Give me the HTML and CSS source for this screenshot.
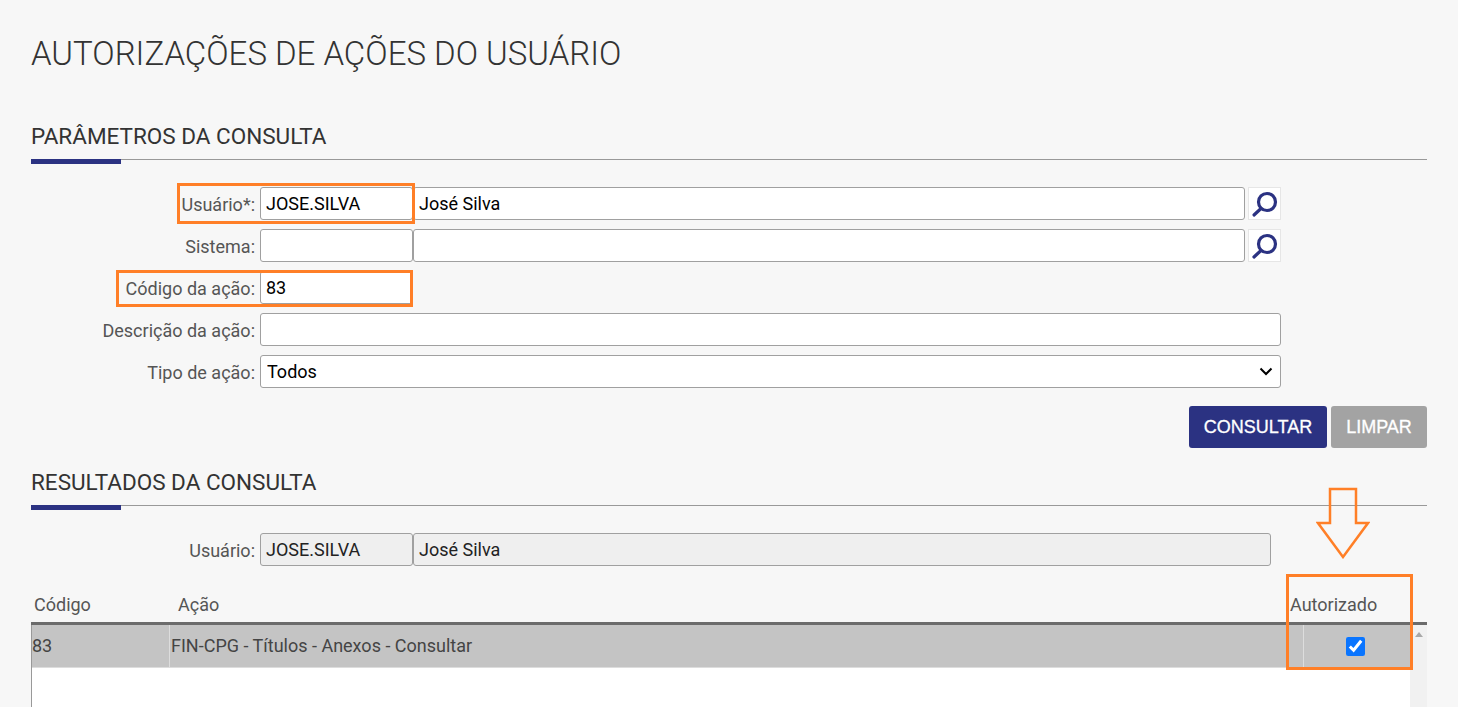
FILE: index.html
```html
<!DOCTYPE html>
<html lang="pt-BR">
<head>
    <meta charset="UTF-8">
    <meta name="viewport" content="width=device-width, initial-scale=1.0">
    <title>Autorizações de ações do usuário</title>
    <link rel="stylesheet" href="styles.css">
</head>
<body>
    <div class="page">
        <h1>AUTORIZAÇÕES DE AÇÕES DO USUÁRIO</h1>

        <h2 class="first">PARÂMETROS DA CONSULTA</h2>
        <form class="filters">
            <div class="form-row">
                <label for="usuario">Usuário*:</label>
                <input type="text" class="code" id="usuario" value="JOSE.SILVA">
                <input type="text" class="name" value="José Silva">
                <button type="button" class="lookup" aria-label="Pesquisar">
                    <svg viewBox="0 0 31 31" width="31" height="31"><circle cx="18" cy="14" r="8.5"/><line x1="12" y1="20.5" x2="5" y2="27"/></svg>
                </button>
            </div>
            <div class="form-row">
                <label for="sistema">Sistema:</label>
                <input type="text" class="code" id="sistema">
                <input type="text" class="name">
                <button type="button" class="lookup" aria-label="Pesquisar">
                    <svg viewBox="0 0 31 31" width="31" height="31"><circle cx="18" cy="14" r="8.5"/><line x1="12" y1="20.5" x2="5" y2="27"/></svg>
                </button>
            </div>
            <div class="form-row">
                <label for="codigo">Código da ação:</label>
                <input type="text" class="code" id="codigo" value="83">
            </div>
            <div class="form-row">
                <label for="descricao">Descrição da ação:</label>
                <input type="text" class="wide" id="descricao">
            </div>
            <div class="form-row">
                <label for="tipo">Tipo de ação:</label>
                <select class="wide" id="tipo"><option>Todos</option></select>
            </div>
            <div class="actions">
                <button type="button" class="btn btn-primary">CONSULTAR</button>
                <button type="button" class="btn btn-muted">LIMPAR</button>
            </div>
        </form>

        <h2>RESULTADOS DA CONSULTA</h2>
        <div class="form-row readonly-row">
            <label>Usuário:</label>
            <input type="text" class="code" value="JOSE.SILVA" readonly>
            <input type="text" class="name-long" value="José Silva" readonly>
        </div>

        <div class="grid-head">
            <span class="col-code">Código</span>
            <span class="col-action">Ação</span>
            <span class="col-auth">Autorizado</span>
        </div>
        <div class="grid-body">
            <div class="grid-rows">
                <div class="grid-row">
                    <span class="cell-code">83</span>
                    <span class="cell-action">FIN-CPG - Títulos - Anexos - Consultar</span>
                    <span class="cell-auth"><input type="checkbox" checked></span>
                </div>
            </div>
            <div class="scrollbar"><span class="scroll-up"></span></div>
        </div>

        <!-- marcacoes em laranja por cima da tela -->
        <div class="mark mark-usuario"></div>
        <div class="mark mark-codigo"></div>
        <div class="mark mark-autorizado"></div>
        <svg class="mark-arrow" width="54" height="72" viewBox="0 0 54 72"><path d="M14 2H40V36H52L27 70L2 36H14Z"/></svg>
    </div>
</body>
</html>
```

FILE: styles.css
```css
html, body {
    margin: 0;
    height: 707px;
    overflow: hidden;
}
body {
    background-color: #f7f7f7;
    font-family: Roboto, sans-serif;
    font-size: 18px;
    color: #555;
}
.page {
    position: relative;
    height: 707px;
    padding: 0 31px;
    box-sizing: border-box;
    overflow: hidden;
}
h1 {
    margin: 0;
    padding-top: 36px;
    font-size: 33px;
    line-height: 36px;
    font-weight: 300;
    color: #333;
}
h2 {
    margin: 19px 0 23px;
    font-size: 22.5px;
    line-height: 30px;
    font-weight: 400;
    color: #333;
}
/* linha cinza com a barrinha azul no inicio */
h2::after {
    content: "";
    display: block;
    height: 5px;
    margin-top: 8px;
    background:
        linear-gradient(#2b3282, #2b3282) left top / 90px 5px no-repeat,
        linear-gradient(#999, #999) left top / 100% 1px no-repeat;
}
h2.first {
    margin-top: 49px;
}
.form-row {
    display: flex;
    align-items: center;
    height: 33px;
    margin-bottom: 9px;
}
.form-row label {
    width: 224px;
    margin-right: 5px;
    padding-top: 2px;
    text-align: right;
}
input[type="text"], select {
    height: 33px;
    box-sizing: border-box;
    border: 1px solid #a0a0a0;
    border-radius: 3px;
    background-color: #fff;
    font-family: Roboto, sans-serif;
    font-size: 18px;
    color: #000;
    padding: 0 5px;
    margin: 0;
    outline: none;
}
select {
    appearance: none;
    padding-left: 6px;
    background: #fff url("data:image/svg+xml,%3Csvg xmlns='http://www.w3.org/2000/svg' width='14' height='9' viewBox='0 0 14 9'%3E%3Cpath d='M1.5 1.5L7 7L12.5 1.5' fill='none' stroke='%23000' stroke-width='2'/%3E%3C/svg%3E") no-repeat right 7px center;
}
.code {
    width: 153px;
}
.name {
    width: 832px;
}
.name-long {
    width: 858px;
}
.wide {
    width: 1021px;
}
input[readonly] {
    background-color: #efefef;
    color: #222;
}
.lookup {
    width: 33px;
    height: 33px;
    margin-left: 3px;
    padding: 0;
    border: 1px solid #e6e6e6;
    background-color: #fff;
    display: flex;
}
.lookup svg {
    fill: none;
    stroke: #2b3282;
    stroke-width: 3.2;
    stroke-linecap: round;
}
.actions {
    display: flex;
    justify-content: flex-end;
    gap: 4px;
    margin-top: 18px;
}
.btn {
    height: 42px;
    border: none;
    border-radius: 3px;
    color: #fff;
    font-family: "Liberation Sans", Arial, sans-serif;
    font-size: 18px;
    -webkit-text-stroke: 0.3px #fff;
    padding: 0;
}
.btn-primary {
    width: 138px;
    background-color: #2b3282;
}
.btn-muted {
    width: 96px;
    background-color: #a3a3a3;
}
.readonly-row {
    margin-bottom: 0;
}
.grid-head {
    display: flex;
    height: 56px;
    align-items: flex-end;
    padding-bottom: 7px;
    box-sizing: border-box;
    line-height: 20px;
}
.col-code {
    width: 144px;
    padding-left: 3px;
}
.col-action {
    width: 1112px;
}
.grid-body {
    display: flex;
    border-top: 3px solid #6b6b6b;
    height: 82px;
}
.grid-rows {
    flex: 1;
    background-color: #fff;
    border-left: 1px solid #999;
}
.grid-row {
    display: flex;
    align-items: center;
    height: 42px;
    background-color: #c4c4c4;
    border-bottom: 1px solid #ddd;
    color: #444;
}
.cell-code {
    width: 137px;
    height: 100%;
    line-height: 42px;
    border-right: 1px solid #ddd;
}
.cell-action {
    width: 1132px;
    height: 100%;
    line-height: 42px;
    padding-left: 1px;
    border-right: 1px solid #ddd;
}
.cell-auth {
    flex: 1;
    display: flex;
    justify-content: center;
    padding-right: 3px;
}
.cell-auth input {
    width: 19px;
    height: 19px;
    margin: 0;
    accent-color: #0a75ff;
}
.scrollbar {
    width: 17px;
    background-color: #f1f1f1;
}
.scroll-up {
    display: block;
    width: 0;
    margin: 7px auto 0;
    border: 4px solid transparent;
    border-top: none;
    border-bottom: 5px solid #a8a8a8;
}
.mark {
    position: absolute;
    box-sizing: border-box;
    border: 3px solid #ff7f27;
}
.mark-usuario {
    left: 177px;
    top: 183px;
    width: 238px;
    height: 41px;
}
.mark-codigo {
    left: 116px;
    top: 270px;
    width: 297px;
    height: 37px;
}
.mark-autorizado {
    left: 1286px;
    top: 574px;
    width: 127px;
    height: 96px;
}
.mark-arrow {
    position: absolute;
    left: 1316px;
    top: 487px;
    fill: none;
    stroke: #ff7f27;
    stroke-width: 2.5;
}
```
